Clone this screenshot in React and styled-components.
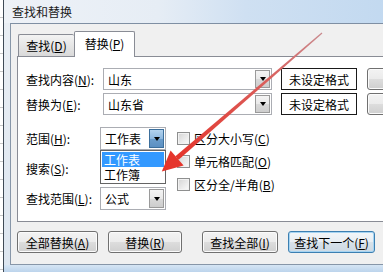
import React from 'react';
import styled, { createGlobalStyle } from 'styled-components';

const Global = createGlobalStyle`
  html, body { margin: 0; padding: 0; }
  body {
    width: 383px; height: 272px; overflow: hidden; background: #fff;
    font-family: "Noto Sans CJK SC", "Microsoft YaHei", sans-serif;
    font-size: 12px; color: #000;
  }
`;

const Page = styled.div`
  position: relative;
  width: 383px;
  height: 272px;
  overflow: hidden;
  display: flex;
`;

const Sheet = styled.div`
  width: 3px;
  flex: none;
  background: repeating-linear-gradient(180deg, #fff 0 17px, #c8c8c8 17px 18px);
`;

const Window = styled.div`
  flex: none;
  width: 440px;
  display: flex;
  flex-direction: column;
  border-left: 1px solid #3f4a56;
`;

const TitleBar = styled.div`
  height: 23px;
  flex: none;
  display: flex;
  align-items: center;
  padding-left: 8px;
  background: linear-gradient(90deg, #eef2f7 0%, #e6edf5 35%, #cfe0f2 55%, #bdd6ef 100%);
  color: #1a1a1a;
`;

const Middle = styled.div`
  height: 242px;
  flex: none;
  display: flex;
`;

const FrameSide = styled.div`
  width: 6px;
  flex: none;
  background: linear-gradient(180deg, #e9eef4, #dde6f0);
`;

const Client = styled.div`
  flex: 1;
  background: #f0f0f0;
  border-top: 1px solid #7f8fa3;
  border-left: 1px solid #8796a8;
  border-bottom: 1px solid #8796a8;
  padding: 7px 0 0 6px;
  display: flex;
  flex-direction: column;
`;

const BottomFrame = styled.div`
  flex: 1;
  background: linear-gradient(180deg, #d6e5f4, #bcd4ec);
`;

const TabStrip = styled.div`
  height: 25px;
  display: flex;
  align-items: flex-end;
  padding-left: 1px;
`;

const Tab = styled.div`
  position: relative;
  z-index: 1;
  box-sizing: border-box;
  height: ${p => (p.$active ? 26 : 22)}px;
  width: ${p => (p.$active ? 61 : 56)}px;
  margin-bottom: ${p => (p.$active ? -1 : 0)}px;
  border: 1px solid #898c95;
  border-bottom: none;
  border-right: ${p => (p.$active ? '1px solid #898c95' : 'none')};
  border-radius: 2px 2px 0 0;
  background: ${p => (p.$active ? '#fff' : 'linear-gradient(180deg, #f3f3f3 0%, #e6e6e6 50%, #d9d9d9 100%)')};
  display: flex;
  align-items: center;
  justify-content: center;
  padding-bottom: ${p => (p.$active ? 2 : 0)}px;
`;

const Panel = styled.div`
  position: relative;
  box-sizing: border-box;
  height: 166px;
  border: 1px solid #898c95;
  background: #fff;
  padding: 11px 0 0 8px;
  display: flex;
  flex-direction: column;
`;

const U = styled.span`
  text-decoration: underline;
  text-underline-offset: 1px;
`;

const FieldRow = styled.div`
  height: 22px;
  display: flex;
  align-items: center;
  margin-bottom: 3px;
`;

const Label = styled.div`
  width: ${p => p.$w}px;
  flex: none;
  white-space: nowrap;
`;

const Combo = styled.div`
  position: relative;
  box-sizing: border-box;
  width: ${p => p.$w}px;
  height: ${p => p.$h}px;
  flex: none;
  border: 1px solid #abadb3;
  background: #fff;
  display: flex;
  align-items: stretch;
`;

const ComboText = styled.div`
  flex: 1;
  padding-left: ${p => p.$pad}px;
  display: flex;
  align-items: center;
  white-space: nowrap;
`;

const DropBtn = styled.div`
  box-sizing: border-box;
  width: 15px;
  flex: none;
  margin: 1px;
  border: 1px solid ${p => (p.$hot ? '#3c6f9c' : '#9a9a9a')};
  background: ${p =>
    p.$hot
      ? 'linear-gradient(180deg, #b3d3ee 0%, #8fb9e0 50%, #6b9dcc 51%, #5c90c2 100%)'
      : 'linear-gradient(180deg, #f4f4f4 0%, #e9e9e9 50%, #d9d9d9 51%, #cdcdcd 100%)'};
  display: flex;
  align-items: center;
  justify-content: center;
  &::after {
    content: '';
    border-left: 3.5px solid transparent;
    border-right: 3.5px solid transparent;
    border-top: 4px solid #000;
  }
`;

const FormatBox = styled.div`
  box-sizing: border-box;
  width: 76px;
  height: 22px;
  margin-left: 9px;
  flex: none;
  border: 1px solid #1a1a1a;
  background: #fff;
  display: flex;
  align-items: center;
  justify-content: center;
`;

const Button = styled.div`
  box-sizing: border-box;
  width: ${p => p.$w}px;
  height: 22px;
  margin-left: ${p => p.$ml || 0}px;
  flex: none;
  border: 1px solid ${p => (p.$default ? '#3c7fb1' : '#707070')};
  border-radius: 3px;
  background: ${p =>
    p.$default
      ? 'linear-gradient(180deg, #f2f6f9 0%, #e8eef3 50%, #d8e2ea 51%, #cdd9e3 100%)'
      : 'linear-gradient(180deg, #f3f3f3 0%, #ebebeb 50%, #dddddd 51%, #cfcfcf 100%)'};
  box-shadow: inset 0 0 0 1px ${p => (p.$default ? '#a6d4f2' : '#fbfbfb')};
  display: flex;
  align-items: center;
  justify-content: center;
  white-space: nowrap;
`;

const OptionSection = styled.div`
  margin-top: 9px;
  display: flex;
`;

const LeftCol = styled.div`
  display: flex;
  flex-direction: column;
  gap: 7px;
`;

const SelectRow = styled.div`
  height: 23px;
  display: flex;
  align-items: center;
`;

const DropList = styled.div`
  position: absolute;
  z-index: 2;
  left: -1px;
  top: calc(100% + 1px);
  box-sizing: border-box;
  width: 66px;
  border: 1px solid #646464;
  background: #fff;
  padding: 1px;
`;

const DropItem = styled.div`
  height: 15px;
  line-height: 15px;
  padding-left: 2px;
  background: ${p => (p.$sel ? '#3399ff' : 'transparent')};
  color: ${p => (p.$sel ? '#fff' : '#000')};
`;

const CheckCol = styled.div`
  margin-left: 11px;
  display: flex;
  flex-direction: column;
`;

const CheckRow = styled.div`
  height: 23px;
  display: flex;
  align-items: center;
  gap: 4px;
  white-space: nowrap;
`;

const Box = styled.div`
  box-sizing: border-box;
  width: 13px;
  height: 13px;
  flex: none;
  border: 1px solid #8e8f8f;
  background: linear-gradient(135deg, #d4d4d4 0%, #e8e8e8 50%, #fbfbfb 100%);
  box-shadow: inset 0 0 0 1px #f2f2f2;
`;

const ButtonRow = styled.div`
  margin-top: 9px;
  display: flex;
`;

const Overlay = styled.svg`
  position: absolute;
  left: 0;
  top: 0;
  pointer-events: none;
  z-index: 5;
`;

function Arrow() {
  return (
    <Overlay width="383" height="272" viewBox="0 0 383 272">
      <defs>
        <linearGradient id="ag" gradientUnits="userSpaceOnUse" x1="322" y1="33" x2="177" y2="158">
          <stop offset="0" stopColor="#c98a8e" />
          <stop offset="0.35" stopColor="#d9615e" />
          <stop offset="1" stopColor="#e5352c" />
        </linearGradient>
      </defs>
      <polygon points="322.4,33.5 178.6,159.8 175.4,156.2 321.6,32.5" fill="url(#ag)" />
      <polygon points="170.6,150.6 183.6,165.4 161.8,171.4" fill="#e5352c" />
    </Overlay>
  );
}

export default function App() {
  return (
    <Page>
      <Global />
      <Sheet />
      <Window>
        <TitleBar>查找和替换</TitleBar>
        <Middle>
          <FrameSide />
          <Client>
            <TabStrip>
              <Tab>查找(<U>D</U>)</Tab>
              <Tab $active>替换(<U>P</U>)</Tab>
            </TabStrip>
            <Panel>
              <FieldRow>
                <Label $w={77}>查找内容(<U>N</U>):</Label>
                <Combo $w={169} $h={22}>
                  <ComboText $pad={4}>山东</ComboText>
                  <DropBtn />
                </Combo>
                <FormatBox>未设定格式</FormatBox>
                <Button $w={70} $ml={10} />
              </FieldRow>
              <FieldRow>
                <Label $w={77}>替换为(<U>E</U>):</Label>
                <Combo $w={169} $h={22}>
                  <ComboText $pad={4}>山东省</ComboText>
                  <DropBtn />
                </Combo>
                <FormatBox>未设定格式</FormatBox>
                <Button $w={70} $ml={10} />
              </FieldRow>
              <OptionSection>
                <LeftCol>
                  <SelectRow>
                    <Label $w={74}>范围(<U>H</U>):</Label>
                    <Combo $w={66} $h={23}>
                      <ComboText $pad={4}>工作表</ComboText>
                      <DropBtn $hot />
                      <DropList>
                        <DropItem $sel>工作表</DropItem>
                        <DropItem>工作簿</DropItem>
                      </DropList>
                    </Combo>
                  </SelectRow>
                  <SelectRow>
                    <Label $w={74}>搜索(<U>S</U>):</Label>
                    <Combo $w={66} $h={23}>
                      <ComboText $pad={4} />
                      <DropBtn />
                    </Combo>
                  </SelectRow>
                  <SelectRow>
                    <Label $w={74}>查找范围(<U>L</U>):</Label>
                    <Combo $w={66} $h={23}>
                      <ComboText $pad={4}>公式</ComboText>
                      <DropBtn />
                    </Combo>
                  </SelectRow>
                </LeftCol>
                <CheckCol>
                  <CheckRow><Box /><span>区分大小写(<U>C</U>)</span></CheckRow>
                  <CheckRow><Box /><span>单元格匹配(<U>O</U>)</span></CheckRow>
                  <CheckRow><Box /><span>区分全/半角(<U>B</U>)</span></CheckRow>
                </CheckCol>
              </OptionSection>
            </Panel>
            <ButtonRow>
              <Button $w={81}>全部替换(<U>A</U>)</Button>
              <Button $w={74} $ml={10}>替换(<U>R</U>)</Button>
              <Button $w={76} $ml={20}>查找全部(<U>I</U>)</Button>
              <Button $w={87} $ml={10} $default>查找下一个(<U>F</U>)</Button>
            </ButtonRow>
          </Client>
        </Middle>
        <BottomFrame />
      </Window>
      <Arrow />
    </Page>
  );
}
